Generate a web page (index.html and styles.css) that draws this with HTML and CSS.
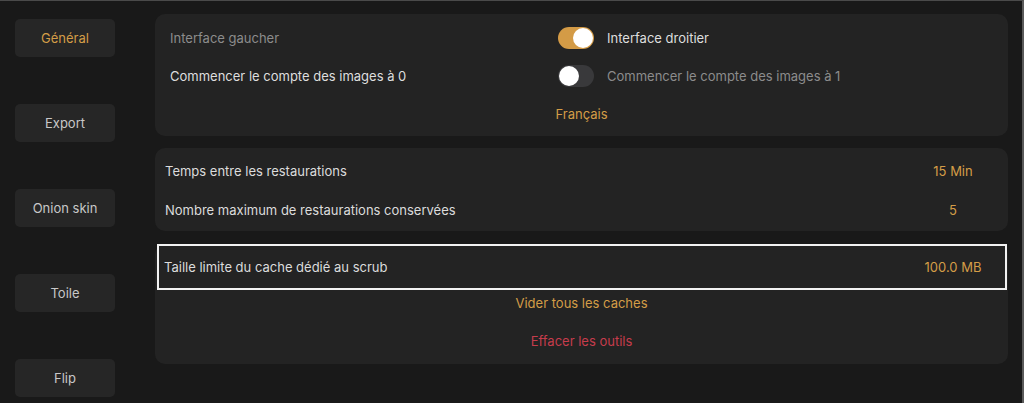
FILE: index.html
```html
<!DOCTYPE html>
<html lang="fr">
<head>
<meta charset="utf-8">
<title>Réglages</title>
<link rel="stylesheet" href="styles.css">
</head>
<body>
<div class="frame">
  <nav class="sidebar">
    <div class="tab active">Général</div>
    <div class="tab">Export</div>
    <div class="tab">Onion skin</div>
    <div class="tab">Toile</div>
    <div class="tab">Flip</div>
  </nav>
  <main class="content">
    <section class="card card-interface">
      <div class="grid">
        <div class="cell dim">Interface gaucher</div>
        <div class="cell"><span class="switch on"><span class="knob"></span></span><span class="bright">Interface droitier</span></div>
        <div class="cell bright">Commencer le compte des images à 0</div>
        <div class="cell"><span class="switch off"><span class="knob"></span></span><span class="dim">Commencer le compte des images à 1</span></div>
      </div>
      <div class="center accent">Français</div>
    </section>
    <section class="card card-restore">
      <div class="row"><span class="label">Temps entre les restaurations</span><span class="value">15 Min</span></div>
      <div class="row"><span class="label">Nombre maximum de restaurations conservées</span><span class="value">5</span></div>
    </section>
    <section class="card card-cache">
      <div class="row selected"><span class="label">Taille limite du cache dédié au scrub</span><span class="value">100.0 MB</span></div>
      <div class="actions">
        <div class="action accent">Vider tous les caches</div>
        <div class="action danger">Effacer les outils</div>
      </div>
    </section>
  </main>
</div>
</body>
</html>
```

FILE: styles.css
```css
* { box-sizing: border-box; }
html, body {
  margin: 0;
  padding: 0;
  width: 1024px;
  height: 403px;
  overflow: hidden;
  background: #191919;
  font-family: Inter, "Noto Sans", "Liberation Sans", sans-serif;
  font-size: 13px;
  color: #dcdcdc;
}
.frame {
  display: flex;
  width: 1024px;
  height: 403px;
  border-top: 1px solid #4a4a4a;
  border-right: 2px solid #5a5a5a;
}
.sidebar {
  width: 155px;
  flex: none;
  padding: 18px 0 0 15px;
  display: flex;
  flex-direction: column;
  gap: 47px;
}
.tab {
  width: 100px;
  height: 38px;
  border-radius: 5px;
  background: #262626;
  color: #c8c8c8;
  display: flex;
  align-items: center;
  justify-content: center;
}
.tab.active { color: #d49d47; }
.content {
  width: 853px;
  flex: none;
  padding-top: 13px;
  display: flex;
  flex-direction: column;
}
.card {
  background: #232323;
  border-radius: 10px;
}
.card-interface {
  height: 122px;
  padding: 5px 0 3px 0;
}
.grid {
  display: grid;
  grid-template-columns: 403px 1fr;
  grid-auto-rows: 38px;
}
.cell {
  display: flex;
  align-items: center;
  padding-left: 15px;
}
.grid .cell:nth-child(2n) { padding-left: 0; }
.switch {
  position: relative;
  width: 36px;
  height: 22px;
  border-radius: 11px;
  flex: none;
  margin-right: 13px;
}
.switch.on { background: #d49b46; }
.switch.off { background: #39393b; }
.knob {
  position: absolute;
  top: 1px;
  width: 20px;
  height: 20px;
  border-radius: 50%;
  background: #ffffff;
}
.switch.on .knob { right: 1px; }
.switch.off .knob { left: 1px; }
.dim { color: #8c8c8c; }
.bright { color: #dedede; }
.accent { color: #d49d47; }
.danger { color: #c63c4c; }
.center {
  height: 38px;
  display: flex;
  align-items: center;
  justify-content: center;
}
.card-restore {
  margin-top: 12px;
  height: 83px;
  padding: 3px 0 2px 0;
}
.row {
  display: flex;
  align-items: center;
  height: 39px;
  padding-left: 10px;
}
.label { flex: 1; }
.value {
  width: 70px;
  margin-right: 20px;
  text-align: center;
  color: #d49d47;
}
.card-cache {
  margin-top: 13px;
  height: 120px;
}
.row.selected {
  height: 46px;
  margin: 0 1px 0 2px;
  border: 2px solid #f2f2f2;
  padding-left: 5px;
  background: #232323;
}
.row.selected .value { margin-right: 17px; }
.actions {
  display: flex;
  flex-direction: column;
  gap: 12px;
}
.action {
  height: 26px;
  display: flex;
  align-items: center;
  justify-content: center;
}
```
